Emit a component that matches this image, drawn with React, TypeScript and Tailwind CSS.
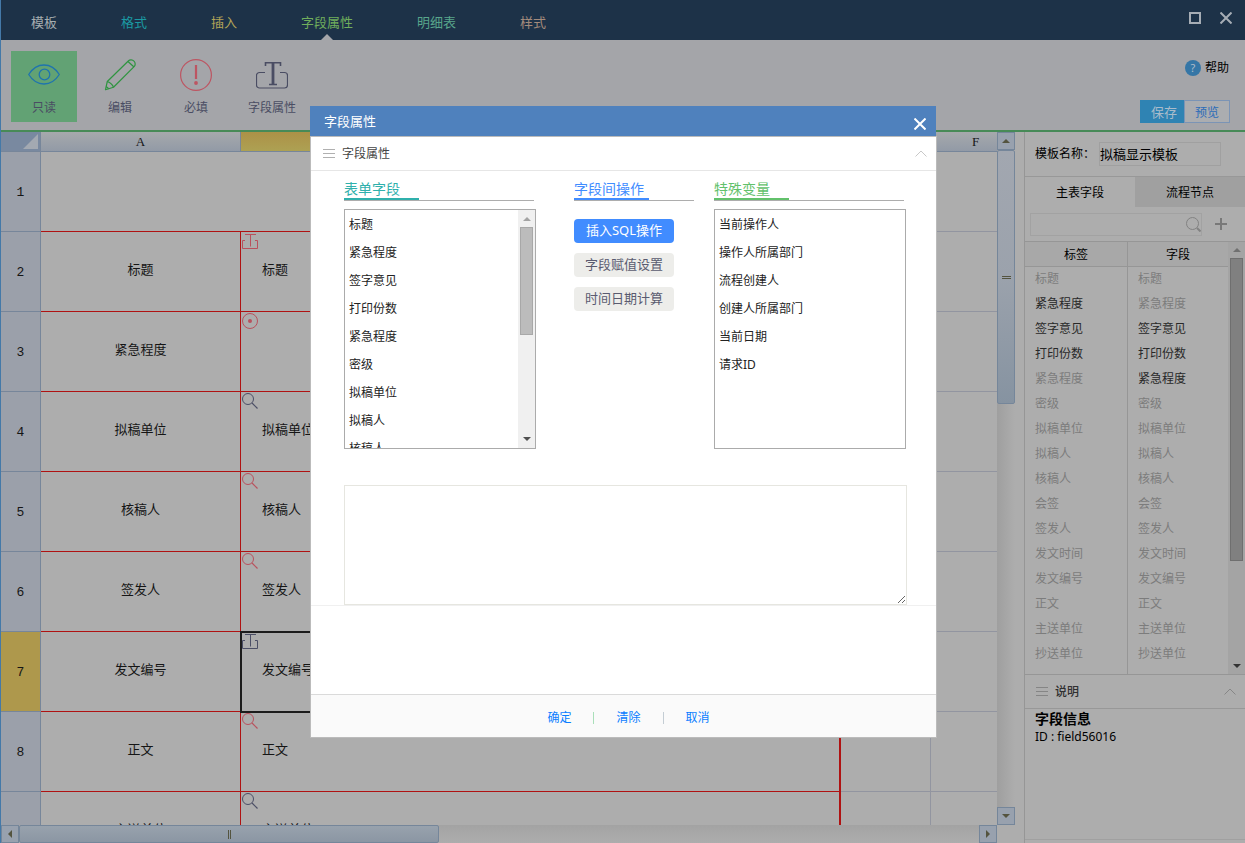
import React from 'react';

type CellIcon = 'text' | 'radio' | 'search';

const tabs = [
  { label: '模板', color: 'text-[#a6adb0]' },
  { label: '格式', color: 'text-[#1b9aa3]' },
  { label: '插入', color: 'text-[#b3a457]' },
  { label: '字段属性', color: 'text-[#70ae5c]', active: true },
  { label: '明细表', color: 'text-[#58a58b]' },
  { label: '样式', color: 'text-[#a38b7c]' },
];

const rows: { a: string; b: string; icon: CellIcon; red: boolean; selected?: boolean }[] = [
  { a: '标题', b: '标题', icon: 'text', red: true },
  { a: '紧急程度', b: '', icon: 'radio', red: true },
  { a: '拟稿单位', b: '拟稿单位', icon: 'search', red: false },
  { a: '核稿人', b: '核稿人', icon: 'search', red: true },
  { a: '签发人', b: '签发人', icon: 'search', red: true },
  { a: '发文编号', b: '发文编号', icon: 'text', red: false, selected: true },
  { a: '正文', b: '正文', icon: 'search', red: true },
  { a: '主送单位', b: '主送单位', icon: 'search', red: false },
];

const fields = [
  { label: '标题' },
  { label: '紧急程度', labelOn: true },
  { label: '签字意见', labelOn: true, fieldOn: true },
  { label: '打印份数', labelOn: true, fieldOn: true },
  { label: '紧急程度', fieldOn: true },
  { label: '密级' },
  { label: '拟稿单位' },
  { label: '拟稿人' },
  { label: '核稿人' },
  { label: '会签' },
  { label: '签发人' },
  { label: '发文时间' },
  { label: '发文编号' },
  { label: '正文' },
  { label: '主送单位' },
  { label: '抄送单位' },
];

const formFields = ['标题', '紧急程度', '签字意见', '打印份数', '紧急程度', '密级', '拟稿单位', '拟稿人', '核稿人'];
const variables = ['当前操作人', '操作人所属部门', '流程创建人', '创建人所属部门', '当前日期', '请求ID'];

const EyeIcon = () => (
  <svg width="32" height="32" viewBox="0 0 32 32" fill="none" stroke="#1f74ae" strokeWidth="1.3">
    <path d="M.7 15.5C4.5 9.500 9.500 6 16 6s11.500 3.500 15.300 9.500C27.500 21.500 22.500 25 16 25S4.500 21.500.7 15.500z" />
    <circle cx="16.500" cy="15.500" r="5.300" />
  </svg>
);

const PencilIcon = () => (
  <svg width="32" height="32" viewBox="0 0 32 32" fill="none" stroke="#2f9440" strokeWidth="1.2" strokeLinejoin="round">
    <path d="M1.500 30.700l1.800-8.200L24.300 2c1.600-1.600 4.200-1.400 5.700.2 1.500 1.500 1.600 4 .1 5.500L9.500 28.200z" />
    <path d="M3.300 22.500c3.200 1.200 5.200 3 6.200 5.700M24 2.500l6 5.500M2.200 27.500l2.500 2.300" />
  </svg>
);

const RequiredIcon = () => (
  <svg width="32" height="32" viewBox="0 0 32 32" fill="none" stroke="#bd5562">
    <circle cx="16" cy="16" r="15.400" strokeWidth="1.200" />
    <path d="M16 6v14" strokeWidth="2.200" />
    <circle cx="16" cy="24" r="1.900" fill="#bd5562" stroke="none" />
  </svg>
);

const FieldIcon = () => (
  <svg width="32" height="32" viewBox="0 0 32 32" fill="none" stroke="#4a4d63">
    <path d="M9 13.500H3.500a3 3 0 0 0-3 3V26a3 3 0 0 0 3 3h25a3 3 0 0 0 3-3v-9.500a3 3 0 0 0-3-3H24" strokeWidth="1.200" />
    <path d="M9.500 7V3.800h15V7M13 25.500h8" strokeWidth="1.600" />
    <path d="M17 4v21" strokeWidth="2.800" />
  </svg>
);

const tools = [
  { label: '只读', icon: <EyeIcon />, active: true },
  { label: '编辑', icon: <PencilIcon /> },
  { label: '必填', icon: <RequiredIcon /> },
  { label: '字段属性', icon: <FieldIcon /> },
];

const CellMark = ({ icon, red }: { icon: CellIcon; red: boolean }) => (
  <svg className="absolute left-px top-px" width="17" height="17" viewBox="0 0 17 17" fill="none" stroke={red ? '#b9515d' : '#4c4f66'}>
    {icon === 'text' && <path d="M3 1.500h11M8.500 1.500v12M3 7.500H.5v8h15v-8H13" />}
    {icon === 'radio' && (
      <>
        <circle cx="8" cy="8" r="7.500" />
        <circle cx="8" cy="8" r="2" fill="#b9515d" stroke="none" />
      </>
    )}
    {icon === 'search' && (
      <>
        <circle cx="6" cy="6" r="5.500" />
        <path d="M10 10l5.500 5.500" strokeWidth="1.200" />
      </>
    )}
  </svg>
);

const CloseIcon = ({ color }: { color: string }) => (
  <svg width="12" height="12" viewBox="0 0 12 12" stroke={color} strokeWidth="2">
    <path d="M.5.5l11 11M11.500.5l-11 11" />
  </svg>
);

const MenuLines = ({ color }: { color: string }) => (
  <svg width="12" height="9" viewBox="0 0 12 9" stroke={color}>
    <path d="M0 .5h12M0 4.500h12M0 8.500h12" />
  </svg>
);

const ChevronUp = ({ color }: { color: string }) => (
  <svg width="12" height="7" viewBox="0 0 12 7" fill="none" stroke={color}>
    <path d="M.5 6.500L6 1l5.500 5.500" />
  </svg>
);

const Arrow = ({ dir, color }: { dir: 'up' | 'down' | 'left' | 'right'; color: string }) => (
  <svg width="8" height="8" viewBox="0 0 8 8" fill={color}>
    {dir === 'up' && <path d="M0 6l4-4 4 4z" />}
    {dir === 'down' && <path d="M0 2l4 4 4-4z" />}
    {dir === 'left' && <path d="M6 0L2 4l4 4z" />}
    {dir === 'right' && <path d="M2 0l4 4-4 4z" />}
  </svg>
);

const arrowButton = 'flex size-[18px] shrink-0 items-center justify-center border border-[#75869a] bg-[#98a1ae]';

const Header = () => (
  <header className="flex h-10 shrink-0 items-center justify-between bg-[#1d3248] pr-3">
    <nav className="flex h-full gap-16 pl-[30px]">
      {tabs.map((tab) => (
        <a key={tab.label} href="#" className={`relative flex h-full items-center pt-1.5 text-[13px] ${tab.color}`}>
          {tab.label}
          {tab.active && (
            <svg className="absolute bottom-0 left-1/2 -translate-x-1/2" width="12" height="6" viewBox="0 0 12 6" fill="#a5a6aa">
              <path d="M0 6l6-6 6 6z" />
            </svg>
          )}
        </a>
      ))}
    </nav>
    <div className="flex items-center gap-[19px] pr-px pb-1">
      <button aria-label="最大化" className="size-3 border-2 border-[#a6adb5]"></button>
      <button aria-label="关闭窗口">
        <CloseIcon color="#a6adb5" />
      </button>
    </div>
  </header>
);

const Toolbar = () => (
  <div className="flex h-[92px] shrink-0 justify-between border-b-2 border-[#478a57] bg-[#a4a5a9] pr-[15px] pl-[10px]">
    <div className="flex gap-[10px] pt-[11px]">
      {tools.map((tool) => (
        <button
          key={tool.label}
          className={`flex h-[71px] w-[66px] flex-col items-center gap-[9px] pt-2 text-xs text-[#4a4d63] ${tool.active ? 'bg-[#62a274]' : ''}`}
        >
          {tool.icon}
          {tool.label}
        </button>
      ))}
    </div>
    <div className="flex flex-col items-end justify-between pt-5 pb-[7px]">
      <a href="#" className="flex items-center gap-1 pr-px text-xs text-black">
        <span className="flex size-4 items-center justify-center rounded-full bg-[#3576a6] text-[11px] text-[#b0bdc9]">?</span>
        帮助
      </a>
      <div className="flex h-[23px]">
        <button className="w-11 bg-[#2f83b3] pt-0.5 pl-1 text-[13px] text-[#a9bccb]">保存</button>
        <button className="w-[46px] border border-[#7b94b5] bg-[#abadb0] pt-0.5 text-xs text-[#2b6cb8]">预览</button>
      </div>
    </div>
  </div>
);

const Sheet = () => (
  <div className="flex min-w-0 flex-1 flex-col">
    <div className="flex min-h-0 flex-1">
      <div className="min-w-0 flex-1 overflow-hidden">
        <table className="w-[1020px] table-fixed border-separate border-spacing-0 text-[13px] text-[#151515]">
          <colgroup>
            <col className="w-10" />
            <col className="w-[200px]" />
            <col className="w-[200px]" />
            <col className="w-[200px]" />
            <col className="w-[200px]" />
            <col className="w-[90px]" />
            <col className="w-[90px]" />
          </colgroup>
          <thead>
            <tr className="h-5">
              <th aria-label="全选" className="border-r border-b border-[#77869a] bg-[#7989a0] p-0">
                <svg className="mr-0.5 ml-auto" width="15" height="15" viewBox="0 0 15 15" fill="#a3a9b2">
                  <path d="M15 0v15H0z" />
                </svg>
              </th>
              {['A', 'B', 'C', 'D', 'E', 'F'].map((name) => (
                <th
                  key={name}
                  className={`border-r border-b border-[#77869a] bg-linear-to-b p-0 font-['Liberation_Serif',serif] leading-4 font-normal ${
                    name === 'B' ? 'from-[#ac9147] to-[#ada153]' : 'from-[#a6a9ac] to-[#929aa6]'
                  }`}
                >
                  {name}
                </th>
              ))}
            </tr>
          </thead>
          <tbody>
            <tr className="h-20">
              <th className="border-r border-b border-[#77869a] bg-[#9ba0aa] p-0 pt-0.5 font-['Liberation_Mono',monospace] font-normal">1</th>
              <td colSpan={4} className="border-b border-[#af1212]"></td>
              <td className="border-b border-[#9295a0]"></td>
              <td className="border-b border-[#9295a0]"></td>
            </tr>
            {rows.map((row, i) => (
              <tr key={row.a} className="h-20">
                <th
                  className={`border-r border-b border-[#77869a] p-0 pt-0.5 font-['Liberation_Mono',monospace] font-normal ${
                    row.selected ? 'bg-[#ae984c]' : 'bg-[#9ba0aa]'
                  }`}
                >
                  {i + 2}
                </th>
                <td className="border-r border-b border-[#af1212] p-0 pb-[3px] text-center">{row.a}</td>
                <td
                  colSpan={3}
                  className={`relative border-r-2 border-b border-[#af1212] p-0 pb-[3px] pl-[21px] ${
                    row.selected ? 'outline-2 -outline-offset-1 outline-[#1c1c1c]' : ''
                  }`}
                >
                  <CellMark icon={row.icon} red={row.red} />
                  {row.b}
                </td>
                <td className="border-r border-b border-[#9295a0]"></td>
                <td className="border-b border-[#9295a0]"></td>
              </tr>
            ))}
          </tbody>
        </table>
      </div>
      <div className="flex w-[18px] shrink-0 flex-col bg-linear-to-r from-[#9f9f9f] to-[#adadad]">
        <button aria-label="向上滚动" className={arrowButton}>
          <Arrow dir="up" color="#54543f" />
        </button>
        <div className="flex h-[254px] flex-col items-center justify-center gap-px rounded-xs border border-[#75869a] bg-linear-to-b from-[#a2a7b0] via-[#9ba2ac] to-[#8693a1]">
          <span className="h-px w-[9px] bg-[#54543f]"></span>
          <span className="h-px w-[9px] bg-[#54543f]"></span>
        </div>
        <button aria-label="向下滚动" className={`${arrowButton} mt-auto`}>
          <Arrow dir="down" color="#54543f" />
        </button>
      </div>
    </div>
    <div className="mr-[18px] flex h-[18px] shrink-0 bg-linear-to-b from-[#a3a3a3] to-[#adadad]">
      <button aria-label="向左滚动" className={arrowButton}>
        <Arrow dir="left" color="#54543f" />
      </button>
      <div className="flex w-[420px] items-center justify-center gap-px rounded-xs border border-[#75869a] bg-linear-to-b from-[#98a2ad] to-[#8b96a3]">
        <span className="h-[9px] w-px bg-[#54543f]"></span>
        <span className="h-[9px] w-px bg-[#54543f]"></span>
      </div>
      <button aria-label="向右滚动" className={`${arrowButton} ml-auto`}>
        <Arrow dir="right" color="#54543f" />
      </button>
    </div>
  </div>
);

const SidePanel = () => (
  <aside className="ml-[9px] flex w-[221px] shrink-0 flex-col border-l border-[#969696] text-xs">
    <div className="flex h-[45px] shrink-0 items-center gap-1 border-b border-[#989898] pl-[10px] text-black">
      <label htmlFor="template" className="w-[60px] whitespace-nowrap">模板名称：</label>
      <input id="template" defaultValue="拟稿显示模板" className="h-6 w-[122px] border border-[#a0a0a0] pb-0.5 text-[13px]" />
    </div>
    <div className="flex h-[30px] shrink-0 text-black">
      <button className="flex-1 pt-0.5">主表字段</button>
      <button className="flex-1 bg-[#a0a0a0] pt-0.5">流程节点</button>
    </div>
    <div className="flex h-[34px] shrink-0 items-center gap-[13px] pl-[5px]">
      <div className="flex h-[23px] w-[172px] items-center border border-[#a2a2a2]">
        <input aria-label="搜索字段" className="h-full min-w-0 flex-1" />
        <svg width="15" height="15" viewBox="0 0 15 15" fill="none" stroke="#828282">
          <circle cx="6.500" cy="6.500" r="6" />
          <path d="M11 11l3.500 3.500" strokeWidth="2" />
        </svg>
      </div>
      <button aria-label="添加字段">
        <svg width="12" height="12" viewBox="0 0 12 12" stroke="#787878" strokeWidth="2">
          <path d="M0 6h12M6 0v12" />
        </svg>
      </button>
    </div>
    <div className="flex h-[434px] shrink-0 border-y border-[#969696]">
      <div className="min-w-0 flex-1">
        <table className="h-full w-full table-fixed border-separate border-spacing-0">
          <thead>
            <tr className="h-[25px] text-black">
              <th className="w-[103px] border-r border-b border-[#969696] bg-[#a8a8a8] p-0 pt-0.5 font-normal">标签</th>
              <th className="border-b border-[#969696] bg-[#a8a8a8] p-0 pt-0.5 font-normal">字段</th>
            </tr>
          </thead>
          <tbody>
            {fields.map((f, i) => (
              <tr key={i} className="h-[25px]">
                <td className={`border-r border-[#969696] p-0 pb-0.5 pl-[10px] ${f.labelOn ? 'text-[#282828]' : 'text-[#7c7c7c]'}`}>{f.label}</td>
                <td className={`p-0 pb-0.5 pl-[10px] ${f.fieldOn ? 'text-[#282828]' : 'text-[#7c7c7c]'}`}>{f.label}</td>
              </tr>
            ))}
            <tr>
              <td className="border-r border-[#969696] p-0"></td>
              <td className="p-0"></td>
            </tr>
          </tbody>
        </table>
      </div>
      <div className="flex w-[17px] flex-col items-center bg-[#a4a4a4] py-1">
        <Arrow dir="up" color="#707070" />
        <div className="mt-1 h-[303px] w-[13px] border border-[#6f6f6f] bg-[#808080]"></div>
        <div className="mt-auto">
          <Arrow dir="down" color="#333333" />
        </div>
      </div>
    </div>
    <div className="flex h-[34px] shrink-0 items-center gap-[7px] border-b border-[#989898] pr-[9px] pl-[11px] text-[#303030]">
      <MenuLines color="#858585" />
      <span className="flex-1 font-medium">说明</span>
      <button aria-label="收起说明">
        <ChevronUp color="#868686" />
      </button>
    </div>
    <div className="mb-[3px] flex-1 border-b border-[#a0a0a0] pt-px pl-[10px] text-black">
      <h3 className="text-sm leading-[18px] font-bold">字段信息</h3>
      <p className="leading-[18px]">ID : field56016</p>
    </div>
  </aside>
);

const GroupTitle = ({ title, text, bar, width }: { title: string; text: string; bar: string; width: string }) => (
  <div className={`h-[22px] border-b border-[#adadad] ${width}`}>
    <h3 className={`h-[21px] w-[75px] border-b-2 text-sm leading-[19px] ${text} ${bar}`}>{title}</h3>
  </div>
);

const ListBox = ({ name, items, scroll }: { name: string; items: string[]; scroll?: boolean }) => (
  <div className="mt-2 flex h-60 w-48 overflow-hidden border border-[#ababab]">
    <ul role="listbox" aria-label={name} className="flex-1 pt-px pl-1 text-xs text-[#222222]">
      {items.map((item, i) => (
        <li key={i} role="option" aria-selected="false" className="h-7 leading-7">
          {item}
        </li>
      ))}
    </ul>
    {scroll && (
      <div className="flex w-[17px] flex-col items-center bg-[#f0f0f0] py-[5px]">
        <Arrow dir="up" color="#a3a3a3" />
        <div className="mt-1 h-[108px] w-[13px] shrink-0 border border-[#a8a8a8] bg-[#bcbcbc]"></div>
        <div className="mt-auto">
          <Arrow dir="down" color="#505050" />
        </div>
      </div>
    )}
  </div>
);

const FieldDialog = () => (
  <div className="absolute inset-0 flex items-center justify-center pt-px pl-px">
    <div role="dialog" aria-label="字段属性" className="w-[627px]">
      <div className="mr-px flex h-[30px] items-center justify-between bg-[#4f81bd] pr-[10px] pl-[14px]">
        <h2 className="pt-px text-[13px] text-white">字段属性</h2>
        <button aria-label="关闭" className="pt-[5px]">
          <CloseIcon color="#ffffff" />
        </button>
      </div>
      <div className="border border-[#bbbbbb] bg-white">
        <div className="flex h-[34px] items-center gap-[7px] border-b border-[#e6e6e6] pr-[9px] pl-3 text-xs text-[#444444]">
          <MenuLines color="#b0b0b0" />
          <span className="flex-1">字段属性</span>
          <button aria-label="收起字段属性">
            <ChevronUp color="#c8c8c8" />
          </button>
        </div>
        <div className="border-b border-[#f0f0f0] pt-2 pr-[29px] pl-[33px]">
          <div className="flex">
            <div className="w-[230px]">
              <GroupTitle title="表单字段" text="text-[#2fb0ac]" bar="border-[#2fb0ac]" width="w-[190px]" />
              <ListBox name="表单字段" items={formFields} scroll />
            </div>
            <div className="w-[140px]">
              <GroupTitle title="字段间操作" text="text-[#418cff]" bar="border-[#418cff]" width="w-[120px]" />
              <div className="mt-[18px] flex w-[100px] flex-col gap-[10px] text-[13px]">
                <button className="h-6 rounded-sm bg-[#418cff] text-white">插入SQL操作</button>
                <button className="h-6 rounded-sm bg-[#ededea] text-[#5a5b70]">字段赋值设置</button>
                <button className="h-6 rounded-sm bg-[#ededea] text-[#5a5b70]">时间日期计算</button>
              </div>
            </div>
            <div>
              <GroupTitle title="特殊变量" text="text-[#62c16b]" bar="border-[#62c16b]" width="w-[190px]" />
              <ListBox name="特殊变量" items={variables} />
            </div>
          </div>
          <textarea aria-label="表达式" className="mt-9 block h-[120px] w-full resize border border-[#e6e6e0]"></textarea>
        </div>
        <div className="h-[88px]"></div>
        <div className="flex h-[43px] items-center justify-center border-t border-[#dadada] bg-[#fafafa] pt-1 pr-[10px] pl-5 text-xs text-[#0a7dff]">
          <button>确定</button>
          <span className="mx-[22px] h-3 w-px bg-[#a9dfb9]"></span>
          <button>清除</button>
          <span className="mx-[22px] h-3 w-px bg-[#c4cdd4]"></span>
          <button>取消</button>
        </div>
      </div>
    </div>
  </div>
);

const App = () => {
  return (
    <div className="relative flex h-screen flex-col overflow-hidden border-l border-[#4479a8] bg-[#adadad] font-['Noto_Sans','Noto_Sans_CJK_SC',sans-serif]">
      <Header />
      <Toolbar />
      <main className="flex min-h-0 flex-1">
        <Sheet />
        <SidePanel />
      </main>
      <FieldDialog />
    </div>
  );
};

export default App;
